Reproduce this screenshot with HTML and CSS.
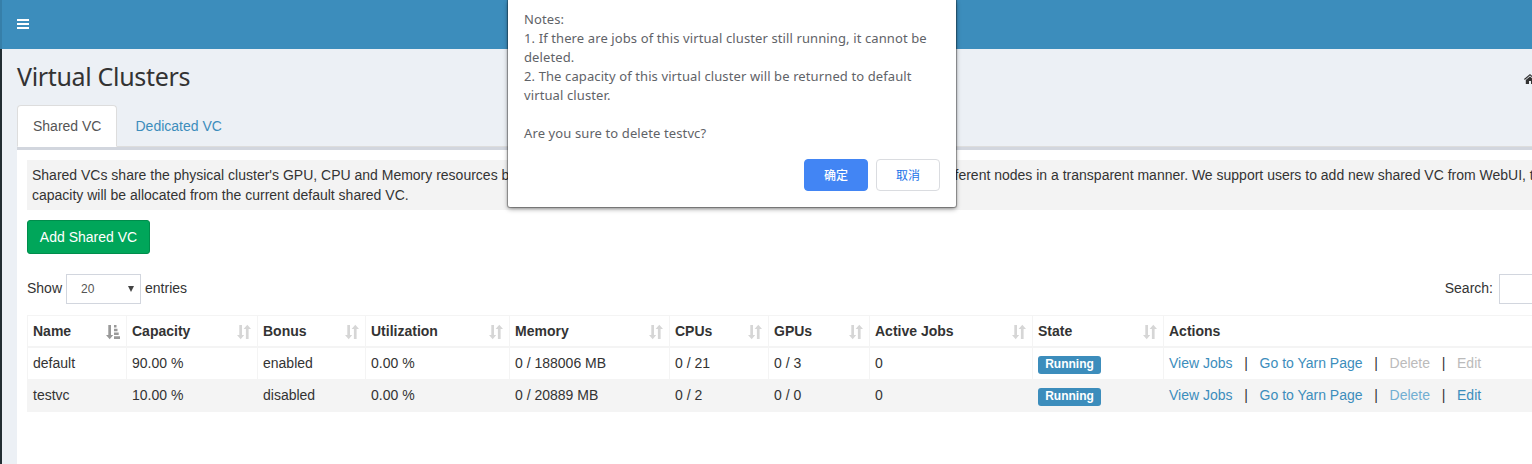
FILE: index.html
```html
<!DOCTYPE html>
<html lang="en">
<head>
<meta charset="utf-8">
<title>Virtual Clusters</title>
<link rel="stylesheet" href="styles.css">
</head>
<body>
<svg class="defs" width="0" height="0">
  <symbol id="sort" viewBox="0 0 14 16"><path d="M2.300 1h2.700v10h2.200l-3.500 4.200L0 11h2.300zM8.900 15V5H6.600l3.700-4.200L14 5h-2.400v10z"/></symbol>
  <symbol id="sort-asc" viewBox="0 0 14 16"><path d="M2.300 1h2.700v10h2.200l-3.500 4.200L0 11h2.300zM8 1h2.500v2.600H8zM8 4.700h3.500v2.600H8zM8 8.500h4.700v2.600H8zM8 12.300h6v2.600H8z"/></symbol>
</svg>
<div class="app">
  <div class="sidebar"></div>
  <div class="main">
    <header class="navbar"><span class="toggle"><i></i><i></i><i></i></span></header>
    <div class="content-header">
      <h1>Virtual Clusters</h1>
      <svg class="home" width="12" height="10" viewBox="0 0 12 10"><path d="M6 0L0 5l.8.9L6 1.600l5.200 4.300.8-.9-2-1.700V.6H8.500v1.500zM6 2.500L1.800 6v4H5V7h2v3h3.200V6z"/></svg>
    </div>
    <div class="content">
      <nav class="tabs"><a class="tab active">Shared VC</a><a class="tab">Dedicated VC</a></nav>
      <section class="panel">
        <div class="callout">
          <div class="line"><span class="lead">Shared VCs share the physical cluster's GPU, CPU and Memory resources by</span><span>different nodes in a transparent manner. We support users to add new shared VC from WebUI, t</span></div>
          <div class="line">capacity will be allocated from the current default shared VC.</div>
        </div>
        <button class="add">Add Shared VC</button>
        <div class="controls">
          <span class="text">Show</span><span class="select">20<svg width="6" height="6" viewBox="0 0 6 6"><path d="M0 0h6L3 6z"/></svg></span><span class="text">entries</span>
          <span class="text search">Search:</span><span class="input"></span>
        </div>
        <table>
          <colgroup><col class="w99"><col class="w131"><col class="w108"><col class="w144"><col class="w160"><col class="w99"><col class="w101"><col class="w163"><col class="w131"><col></colgroup>
          <thead><tr>
            <th><div>Name<svg class="on"><use href="#sort-asc"/></svg></div></th>
            <th><div>Capacity<svg><use href="#sort"/></svg></div></th>
            <th><div>Bonus<svg><use href="#sort"/></svg></div></th>
            <th><div>Utilization<svg><use href="#sort"/></svg></div></th>
            <th><div>Memory<svg><use href="#sort"/></svg></div></th>
            <th><div>CPUs<svg><use href="#sort"/></svg></div></th>
            <th><div>GPUs<svg><use href="#sort"/></svg></div></th>
            <th><div>Active Jobs<svg><use href="#sort"/></svg></div></th>
            <th><div>State<svg><use href="#sort"/></svg></div></th>
            <th><div>Actions</div></th>
          </tr></thead>
          <tbody>
            <tr><td>default</td><td>90.00 %</td><td>enabled</td><td>0.00 %</td><td>0 / 188006 MB</td><td>0 / 21</td><td>0 / 3</td><td>0</td><td><span class="label">Running</span></td>
              <td><div class="actions"><a>View Jobs</a><b>|</b><a>Go to Yarn Page</a><b>|</b><a class="off">Delete</a><b>|</b><a class="off">Edit</a></div></td></tr>
            <tr><td>testvc</td><td>10.00 %</td><td>disabled</td><td>0.00 %</td><td>0 / 20889 MB</td><td>0 / 2</td><td>0 / 0</td><td>0</td><td><span class="label">Running</span></td>
              <td><div class="actions"><a>View Jobs</a><b>|</b><a>Go to Yarn Page</a><b>|</b><a class="hover">Delete</a><b>|</b><a>Edit</a></div></td></tr>
          </tbody>
        </table>
      </section>
    </div>
  </div>
  <div class="dialog">
    <p>Notes:<br>1. If there are jobs of this virtual cluster still running, it cannot be<br>deleted.<br>2. The capacity of this virtual cluster will be returned to default<br>virtual cluster.<br><br>Are you sure to delete testvc?</p>
    <div class="buttons"><button class="ok">确定</button><button class="cancel">取消</button></div>
  </div>
</div>
</body>
</html>
```
FILE: styles.css
```css
* { box-sizing: border-box; }
body { margin: 0; font: 14px/20px "Liberation Sans", Arial, sans-serif; color: #333; }
.defs { position: absolute; }
.app { position: relative; width: 1532px; height: 464px; overflow: hidden; display: flex; background: #ecf0f5; }
.sidebar { width: 2px; flex: none; background: #222d32; border-top: 49px solid #367fa9; }
.main { flex: 1; min-width: 0; display: flex; flex-direction: column; }
.navbar { height: 49px; background: #3c8dbc; padding: 19px 15px; }
.toggle { display: flex; flex-direction: column; gap: 2px; width: 12px; }
.toggle i { height: 2px; background: #fff; }
.content-header { height: 56px; padding: 14px 0 0 15px; display: flex; justify-content: space-between; }
h1 { margin: 0; font: 400 25px/26px "Noto Sans", sans-serif; letter-spacing: -.33px; white-space: nowrap; }
.home { flex: none; margin: 11px -4px 0 0; fill: #333; }
.content { flex: 1; padding-left: 15px; display: flex; flex-direction: column; }
.tabs { height: 42px; display: flex; gap: 2px; border-bottom: 1px solid #ddd; }
.tab { height: 42px; padding: 10px 15px; border: 1px solid transparent; color: #3c8dbc; }
.tab.active { color: #555; background: #fff; border-color: #ddd #ddd #fff; border-radius: 4px 4px 0 0; }
.panel { flex: 1; width: 1540px; background: #fff; border-top: 3px solid #d2d6de; padding: 10px; }
.callout { height: 50px; padding: 5px; background: #f3f3f3; }
.line { display: flex; white-space: nowrap; }
.lead { width: 908px; flex: none; }
button { font: inherit; margin: 0; }
.add { display: block; width: 123px; height: 34px; margin-top: 10px; padding: 0; color: #fff; background: #00a65a; border: 1px solid #008d4c; border-radius: 3px; }
.controls { display: flex; align-items: center; height: 30px; margin-top: 20px; width: 1505px; }
.text { padding-bottom: 2px; }
.select { width: 75px; height: 30px; margin: 0 4px; padding: 0 6px 0 14px; border: 1px solid #d2d6de; display: flex; align-items: center; justify-content: space-between; font-size: 12px; color: #555; }
.select svg { fill: #444; }
.search { margin-left: auto; margin-right: 6px; }
.input { width: 60px; margin-right: -27px; height: 30px; border: 1px solid #d2d6de; }
table { table-layout: fixed; width: 1530px; margin-top: 11px; border-collapse: separate; border-spacing: 0; border-top: 1px solid #f4f4f4; border-left: 1px solid #f4f4f4; }
.w99 { width: 99px; } .w131 { width: 131px; } .w108 { width: 108px; } .w144 { width: 144px; } .w160 { width: 160px; } .w101 { width: 101px; } .w163 { width: 163px; }
th, td { padding: 0 5px; text-align: left; border-right: 1px solid #f4f4f4; white-space: nowrap; }
th { height: 32px; border-bottom: 2px solid #f4f4f4; }
th div { display: flex; justify-content: space-between; align-items: center; }
th svg { width: 14px; height: 16px; margin: 1px 1px 0 0; fill: #d6d6d6; }
th svg.on { fill: #999; }
td { height: 31px; padding-bottom: 1px; }
tbody tr:nth-child(2) td { background: #f4f4f4; height: 33px; }
.label { display: block; width: 63px; height: 18px; margin-top: 3px; border-radius: 3px; background: #3c8dbc; color: #fff; font-weight: 700; font-size: 12px; line-height: 16px; text-align: center; }
.actions { display: flex; }
.actions b { font-weight: 400; width: 27px; text-align: center; }
a { color: #3c8dbc; }
a.off { color: #bbb; }
a.hover { color: #72afd2; }
.dialog { position: absolute; left: 508px; top: 0; width: 448px; height: 207px; padding: 10px 16px 16px; background: #fff; border-radius: 0 0 2px 2px; box-shadow: 0 0 1px 1px rgba(0,0,0,.35), 0 2px 5px rgba(0,0,0,.4); color: #5f6368; }
.dialog p { margin: 0; font: 13px/19px "Noto Sans", sans-serif; letter-spacing: .11px; white-space: nowrap; }
.buttons { display: flex; justify-content: flex-end; gap: 8px; margin-top: 16px; }
.buttons button { width: 64px; height: 32px; padding: 0; border-radius: 4px; border: 1px solid #dadce0; background: #fff; color: #1a73e8; font: 12px/30px "Noto Sans CJK SC", sans-serif; }
.buttons .ok { background: #4285f4; border-color: #4285f4; color: #fff; font-weight: 500; }
```
